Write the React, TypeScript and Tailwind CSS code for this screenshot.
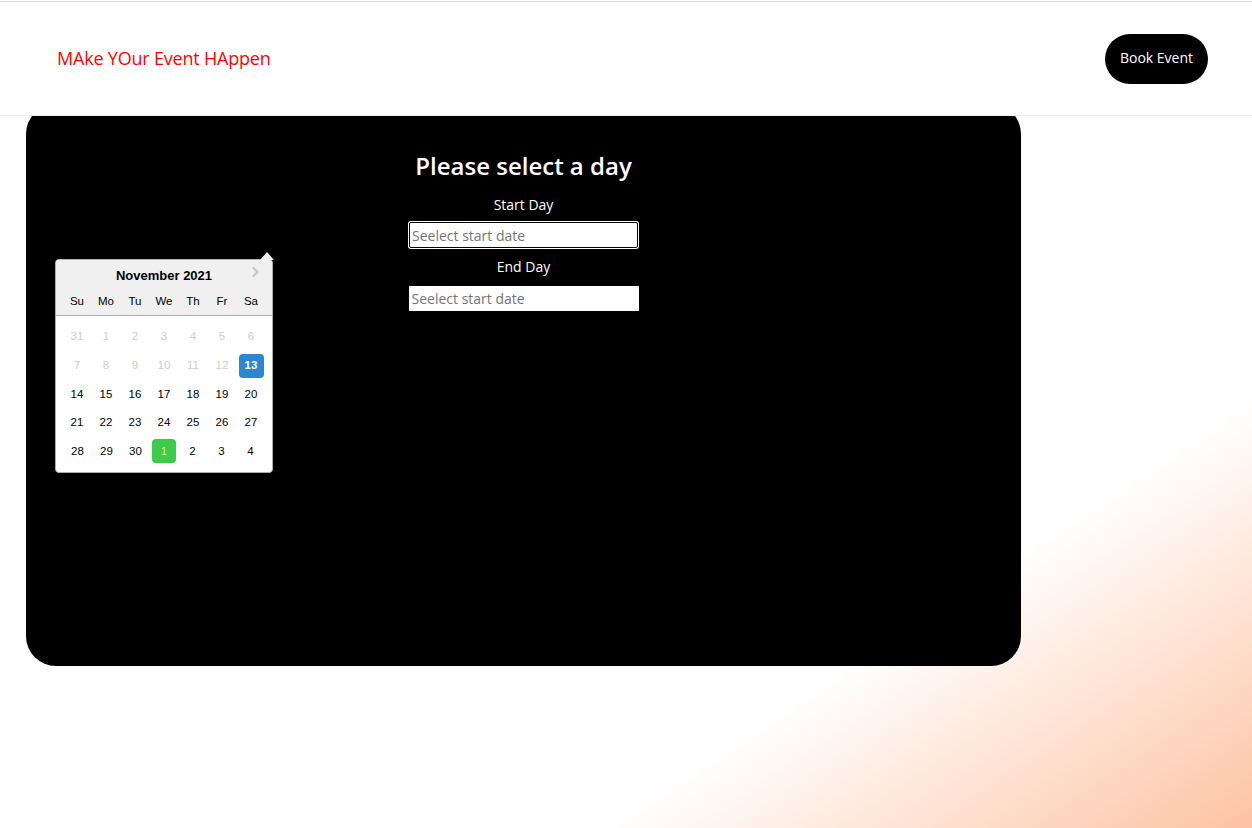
import React from "react";

const dayNames = ["Su", "Mo", "Tu", "We", "Th", "Fr", "Sa"];

const weeks = [
  [31, 1, 2, 3, 4, 5, 6],
  [7, 8, 9, 10, 11, 12, 13],
  [14, 15, 16, 17, 18, 19, 20],
  [21, 22, 23, 24, 25, 26, 27],
  [28, 29, 30, 1, 2, 3, 4],
];

function DayCell({ day, week, col }: { day: number; week: number; col: number }) {
  const disabled = week < 1 || (week === 1 && col < 6);
  const selected = week === 1 && col === 6;
  const highlighted = week === 4 && col === 3;

  if (selected) {
    return (
      <div className="w-[25px] h-[24px] mx-[2px] rounded-[4px] bg-[#2a87d0] text-white font-bold flex items-center justify-center">
        {day}
      </div>
    );
  }
  if (highlighted) {
    return (
      <div className="w-[24px] h-[24px] mx-[2px] rounded-[4px] bg-[#3dcc4a] text-[#d8e6a8] flex items-center justify-center">
        {day}
      </div>
    );
  }
  return (
    <div
      className={
        "w-[25px] h-[24px] mx-[2px] flex items-center justify-center " +
        (disabled ? "text-[#cccccc]" : "text-black")
      }
    >
      {day}
    </div>
  );
}

function DatePickerPopup() {
  return (
    <div className="absolute left-[29px] top-[155px] w-[218px] rounded-[4px] border border-[#aeaeae] bg-white shadow-sm font-['Liberation_Sans',Arial,sans-serif]">
      {/* little arrow pointing to the input */}
      <div className="absolute -top-[8px] right-[-2px] w-0 h-0 border-l-[7px] border-r-[7px] border-b-[8px] border-l-transparent border-r-transparent border-b-[#f0f0f0]" />
      <div className="relative bg-[#f0f0f0] rounded-t-[4px] border-b border-[#aeaeae] pt-[8px]">
        <div className="text-center text-[13px] font-bold text-black leading-[16px]">November 2021</div>
        <svg
          className="absolute right-[12px] top-[5px]"
          width="10"
          height="14"
          viewBox="0 0 10 14"
          fill="none"
        >
          <path d="M3 2.5 L7.5 7 L3 11.5" stroke="#c4c4c4" strokeWidth="2" />
        </svg>
        <div className="flex justify-center px-[5px] pt-[9px] pb-[6px] text-[11.5px] text-black">
          {dayNames.map((d) => (
            <div key={d} className="w-[25px] mx-[2px] text-center leading-[16px]">
              {d}
            </div>
          ))}
        </div>
      </div>
      <div className="flex flex-col gap-[4.6px] py-[9px] px-[5px] text-[11.5px]">
        {weeks.map((w, wi) => (
          <div key={wi} className="flex justify-center">
            {w.map((d, ci) => (
              <DayCell key={ci} day={d} week={wi} col={ci} />
            ))}
          </div>
        ))}
      </div>
    </div>
  );
}

export default function App() {
  return (
    <div className="h-[828px] overflow-hidden pt-px bg-[linear-gradient(to_bottom_right,#ffffff_74%,#fdc3a3_100%)] font-['Open_Sans','Noto_Sans',sans-serif]">
      <header className="relative z-10 h-[115px] bg-white border-t border-b border-t-[#dedede] border-b-[#eeeeee] flex items-center justify-between pl-[57px] pr-[44px]">
        <div className="text-[18px] text-[#ff0000] tracking-[-0.2px]">MAke YOur Event HAppen</div>
        <button className="h-[50px] w-[103px] rounded-full bg-black text-white text-[14px] leading-[18px] pb-[2px]">Book Event</button>
      </header>

      <main className="pl-[26px]">
        <div className="relative -mt-[12px] w-[995px] h-[562px] rounded-[30px] bg-black flex flex-col items-center pt-[44px]">
          <h1 className="text-[24px] font-semibold text-white leading-[36px] mb-[11px]">Please select a day</h1>
          <label className="text-[14px] text-white leading-[20px] mb-[7px]">Start Day</label>
          <input
            className="w-[229px] h-[26px] bg-white border border-black ring-1 ring-white rounded-[2px] px-[2px] text-[14px] placeholder:text-[#757575] outline-none"
            placeholder="Seelect start date"
          />
          <label className="text-[14px] text-white leading-[20px] mt-[9px] mb-[9px]">End Day</label>
          <input
            className="w-[230px] h-[25px] bg-white px-[3px] text-[14px] placeholder:text-[#757575] outline-none"
            placeholder="Seelect start date"
          />
          <DatePickerPopup />
        </div>
      </main>
    </div>
  );
}
